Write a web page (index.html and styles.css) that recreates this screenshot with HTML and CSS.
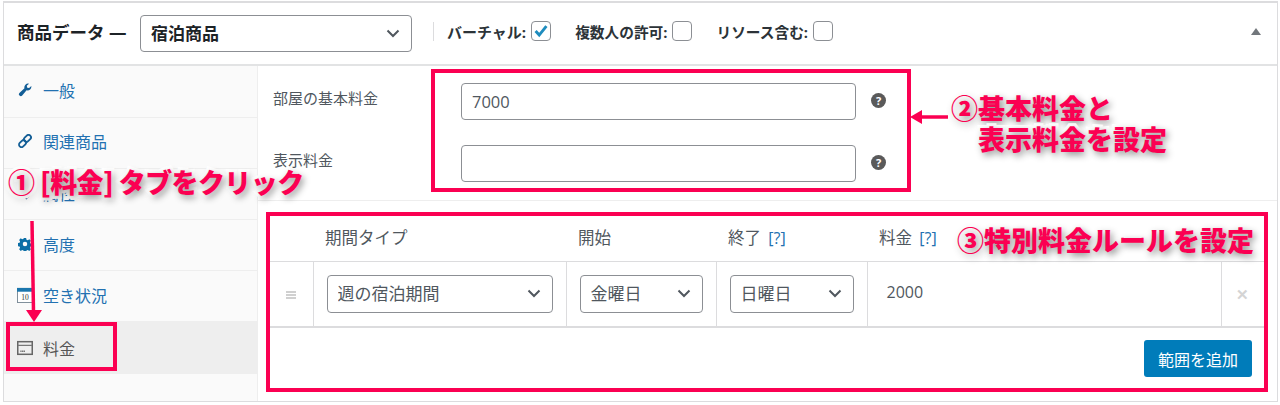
FILE: index.html
```html
<!DOCTYPE html>
<html lang="ja">
<head>
<meta charset="utf-8">
<title>商品データ</title>
<link rel="stylesheet" href="styles.css">
</head>
<body>
<div class="panel">
  <header class="head">
    <h2 class="title">商品データ —</h2>
    <select class="sel sel-type"><option>宿泊商品</option></select>
    <span class="divider"></span>
    <label class="opt opt-first">バーチャル:<span class="cb"><svg viewBox="0 0 20 20" width="18" height="18"><path d="M4 10l4 4.500 8-10" fill="none" stroke="#1e8cbe" stroke-width="3.200"/></svg></span></label>
    <label class="opt opt-tight">複数人の許可:<span class="cb"></span></label>
    <label class="opt opt-tight">リソース含む:<span class="cb"></span></label>
    <span class="toggle"></span>
  </header>
  <div class="body">
    <nav class="tabs">
      <a class="tab tab-up"><span class="ic"><svg class="ico" viewBox="0 0 16 16"><path d="M15.200 3.400a4.300 4.300 0 0 1-5.400 4.900l-5 5.900a2.100 2.100 0 0 1-3.200-2.800l5.800-5.300A4.300 4.300 0 0 1 12.600.800L10 3.200l.6 2.100 2.100.5z" fill="#135e96"/></svg></span>一般</a>
      <a class="tab tab-up"><span class="ic"><svg class="ico" viewBox="0 0 16 16"><g fill="none" stroke="#135e96" stroke-width="2.100"><rect x="8" y="0.500" width="5.600" height="9" rx="2.800" transform="rotate(45 10.800 5)"/><rect x="2.400" y="6.500" width="5.600" height="9" rx="2.800" transform="rotate(45 5.200 11)"/></g></svg></span>関連商品</a>
      <a class="tab"><span class="ic"><svg class="ico" viewBox="0 0 16 16"><path d="M1 2h6l8 8-5.500 5.500-8.500-8z" fill="#135e96"/></svg></span>属性</a>
      <a class="tab"><span class="ic"><svg class="ico" viewBox="0 0 16 16"><path d="M6.700 1h2.600l.4 2 1.500.6 1.700-1.100 1.800 1.800-1.100 1.700.6 1.500 2 .4v2.600l-2 .4-.6 1.500 1.100 1.700-1.800 1.800-1.700-1.100-1.500.6-.4 2H6.700l-.4-2-1.500-.6-1.700 1.100-1.800-1.800 1.100-1.700-.6-1.500-2-.4V6.900l2-.4.6-1.500-1.100-1.700 1.800-1.800 1.700 1.100 1.500-.6zM8 5.400a2.600 2.600 0 1 0 0 5.200 2.600 2.600 0 0 0 0-5.200z" fill="#0b6ea6" fill-rule="evenodd"/></svg></span>高度</a>
      <a class="tab"><span class="ic"><svg class="ico-lg" viewBox="0 0 17 17"><rect x="0.500" y="1.500" width="16" height="15" fill="#fff" stroke="#7a8a96"/><rect x="0" y="1" width="17" height="4" fill="#1b76ad"/><text x="8.500" y="14" class="cal-num">10</text></svg></span>空き状況</a>
      <a class="tab tab-on"><span class="ic"><svg class="ico-lg" viewBox="0 0 17 15"><rect x="0.800" y="0.800" width="15.400" height="13.400" fill="none" stroke="#666" stroke-width="1.600"/><path d="M1 4.700h15" stroke="#777" stroke-width="1.300"/><path d="M3.500 11h5" stroke="#777" stroke-width="1.500" stroke-dasharray="1.400 .4"/></svg></span>料金</a>
    </nav>
    <main class="main">
      <div class="fields">
        <div class="field"><label class="flabel">部屋の基本料金</label><input class="inp" value="7000"><span class="help">?</span></div>
        <div class="field"><label class="flabel">表示料金</label><input class="inp" value=""><span class="help">?</span></div>
      </div>
      <div class="rules">
        <table class="rt">
          <thead>
            <tr>
              <th class="c-drag"></th>
              <th class="c-type">期間タイプ</th>
              <th class="c-day">開始</th>
              <th class="c-end">終了 <a class="q">[?]</a></th>
              <th class="c-price">料金 <a class="q">[?]</a></th>
              <th class="c-x"></th>
            </tr>
          </thead>
          <tbody>
            <tr>
              <td class="drag"><span class="grip"></span></td>
              <td><select class="sel sel-row"><option>週の宿泊期間</option></select></td>
              <td><select class="sel sel-row"><option>金曜日</option></select></td>
              <td><select class="sel sel-row"><option>日曜日</option></select></td>
              <td class="price">2000</td>
              <td class="x">✕</td>
            </tr>
          </tbody>
        </table>
        <div class="foot"><button class="btn">範囲を追加</button></div>
      </div>
    </main>
  </div>
</div>

<div class="box box-tab"></div>
<div class="box box-fields"></div>
<div class="box box-rules"></div>

<svg class="arrows" width="1280" height="405" viewBox="0 0 1280 405">
  <path d="M32 221l1.500 90" stroke="#fb0052" stroke-width="3.500" fill="none"/>
  <path d="M26 310h16l-8 12z" fill="#fb0052"/>
  <path d="M948 117h-30" stroke="#fb0052" stroke-width="3.500" fill="none"/>
  <path d="M922 110v14l-12-7z" fill="#fb0052"/>
</svg>

<div class="note note-1">①&nbsp;[料金] タブをクリック</div>
<div class="note note-2">②基本料金と<br><span class="indent">表示料金を設定</span></div>
<div class="note note-3">③特別料金ルールを設定</div>
</body>
</html>
```

FILE: styles.css
```css
* { box-sizing: border-box; }
html, body { margin: 0; height: 405px; overflow: hidden; background: #fff; }
body {
  position: relative;
  padding: 1px 2px 0 3px;
  font-family: "Open Sans", "Noto Sans CJK JP", sans-serif;
  color: #50575e;
}
.panel {
  height: 401px;
  width: 1275px;
  border: 1px solid #dcdcde;
  border-top-width: 2px;
  display: flex;
  flex-direction: column;
  background: #fff;
}
.head {
  height: 63px;
  flex: none;
  display: flex;
  align-items: center;
  padding: 0 16px 5px 13px;
  border-bottom: 2px solid #e2e3e4;
}
.title {
  margin: 0 13px 0 0;
  font-size: 17.500px;
  font-weight: 700;
  color: #1d2327;
  width: 110px;
  white-space: nowrap;
}
.sel {
  appearance: none;
  -webkit-appearance: none;
  font-family: inherit;
  background: #fff url("data:image/svg+xml,%3Csvg xmlns='http://www.w3.org/2000/svg' width='14' height='9'%3E%3Cpath d='M1.500 1.500l5.500 5.500 5.500-5.500' fill='none' stroke='%2350575e' stroke-width='2'/%3E%3C/svg%3E") no-repeat right 11px center;
  border: 1px solid #8c8f94;
  border-radius: 4px;
  color: #2c3338;
}
.sel-type {
  width: 272px;
  height: 37px;
  margin-top: 5px;
  padding: 0 30px 0 10px;
  font-size: 17px;
  font-weight: 700;
  color: #1d2327;
}
.divider { width: 1px; height: 19px; background: #dcdcde; margin: 0 0 0 21px; }
.opt {
  display: flex;
  align-items: center;
  gap: 5px;
  margin-left: 24px;
  font-size: 15px;
  font-weight: 700;
  color: #2c3338;
  white-space: nowrap;
}
.opt-first { margin-left: 13px; }
.opt-tight { font-size: 14.700px; }
.cb {
  width: 20px;
  height: 20px;
  border: 1px solid #8c8f94;
  border-radius: 4px;
  background: #fff;
  display: block;
}
.cb svg { display: block; }
.toggle {
  margin-left: auto;
  width: 0;
  height: 0;
  border-left: 5px solid transparent;
  border-right: 5px solid transparent;
  border-bottom: 7px solid #72777c;
}
.body { flex: 1; display: flex; min-height: 0; }
.tabs {
  width: 254px;
  flex: none;
  padding-top: 1px;
  background: #fafafa;
  border-right: 1px solid #eee;
}
.tab {
  height: 51px;
  display: flex;
  align-items: center;
  padding: 0 0 2px 13px;
  font-size: 16px;
  color: #2271b1;
  border-bottom: 1px solid #eee;
  background: #fafafa;
}
.tab-up { padding-bottom: 4px; }
.tab-on { height: 52px; padding-bottom: 1px; border-bottom: 0; color: #555; background: #eee; }
.ic { width: 26px; flex: none; display: flex; align-items: center; }
.ico { width: 14px; height: 14px; display: block; margin-left: 1px; }
.ico-lg { width: 16px; height: 16px; display: block; }
.cal-num { font: 8px "Liberation Serif", serif; text-anchor: middle; fill: #333; }
.main { flex: 1; min-width: 0; display: flex; flex-direction: column; }
.fields {
  height: 135px;
  flex: none;
  padding: 17px 0 0 15px;
  border-bottom: 1px solid #eee;
  display: flex;
  flex-direction: column;
  gap: 25px;
}
.field { display: flex; align-items: center; height: 37px; }
.flabel { width: 188px; margin-top: -8px; font-size: 15px; color: #50575e; flex: none; }
.inp {
  width: 395px;
  height: 37px;
  border: 1px solid #8c8f94;
  border-radius: 4px;
  padding: 0 10px;
  font: 16.500px "Open Sans", "Noto Sans CJK JP", sans-serif;
  color: #50575e;
  background: #fff;
}
.help {
  width: 15px;
  height: 15px;
  margin: -2px 0 0 15px;
  border-radius: 50%;
  background: #5a5a5a;
  color: #fff;
  font-size: 11px;
  font-weight: 700;
  line-height: 15px;
  text-align: center;
}
.rules { margin: 12px 0 0 12px; width: 994px; }
.rt {
  width: 100%;
  table-layout: fixed;
  border-collapse: collapse;
}
.rt th {
  height: 48px;
  padding: 0 0 0 12px;
  text-align: left;
  font-size: 16.500px;
  font-weight: 400;
  color: #50575e;
  border-bottom: 1px solid #dcdcde;
}
.c-drag { width: 43px; }
.c-type { width: 253px; }
.c-day { width: 150px; }
.c-end { width: 151px; }
.c-x { width: 43px; }
.q { color: #2271b1; font-size: 16px; margin-left: 3px; }
.rt td {
  height: 66px;
  padding: 0 13px;
  border-right: 1px solid #dcdcde;
  border-bottom: 2px solid #dcdcde;
  font-size: 16px;
}
.rt td:last-child { border-right: 0; }
.sel-row {
  display: block;
  width: 100%;
  height: 38px;
  padding: 0 30px 0 10px;
  font-size: 17px;
  color: #50575e;
}
.drag { padding: 0 !important; text-align: center; }
.grip {
  display: inline-block;
  width: 10px;
  height: 9px;
  background: repeating-linear-gradient(#d0d0d0 0 2px, #fff 2px 3px);
}
.price { color: #50575e; padding: 0 0 4px 19px !important; }
.x { padding: 0 !important; text-align: center; color: #d4d4d4; font-weight: 700; font-size: 15px !important; }
.foot { display: flex; justify-content: flex-end; padding: 12px 12px 0 0; }
.btn {
  width: 108px;
  height: 37px;
  border: 0;
  border-radius: 3px;
  background: #007cba;
  color: #fff;
  font: 16px "Open Sans", "Noto Sans CJK JP", sans-serif;
  padding: 0;
}

/* annotations layered over the screenshot */
.box { position: absolute; border: 4px solid #fb0052; }
.box-tab { left: 6px; top: 322px; width: 111px; height: 49px; }
.box-fields { left: 431px; top: 69px; width: 480px; height: 123px; }
.box-rules { left: 266px; top: 212px; width: 1002px; height: 180px; }
.arrows { position: absolute; left: 0; top: 0; pointer-events: none; }
.note {
  position: absolute;
  font: 900 27px/36px "Noto Sans CJK JP", sans-serif;
  color: #fb0052;
  white-space: nowrap;
  -webkit-text-stroke: 6px #fff;
  paint-order: stroke fill;
  text-shadow: 2px 3px 7px rgba(0, 0, 0, .45);
}
.indent { padding-left: 27px; }
.note-1 { left: 8px; top: 164px; letter-spacing: -.6px; }
.note-2 { left: 951px; top: 92px; line-height: 31px; }
.note-3 { left: 957px; top: 222px; }
```
